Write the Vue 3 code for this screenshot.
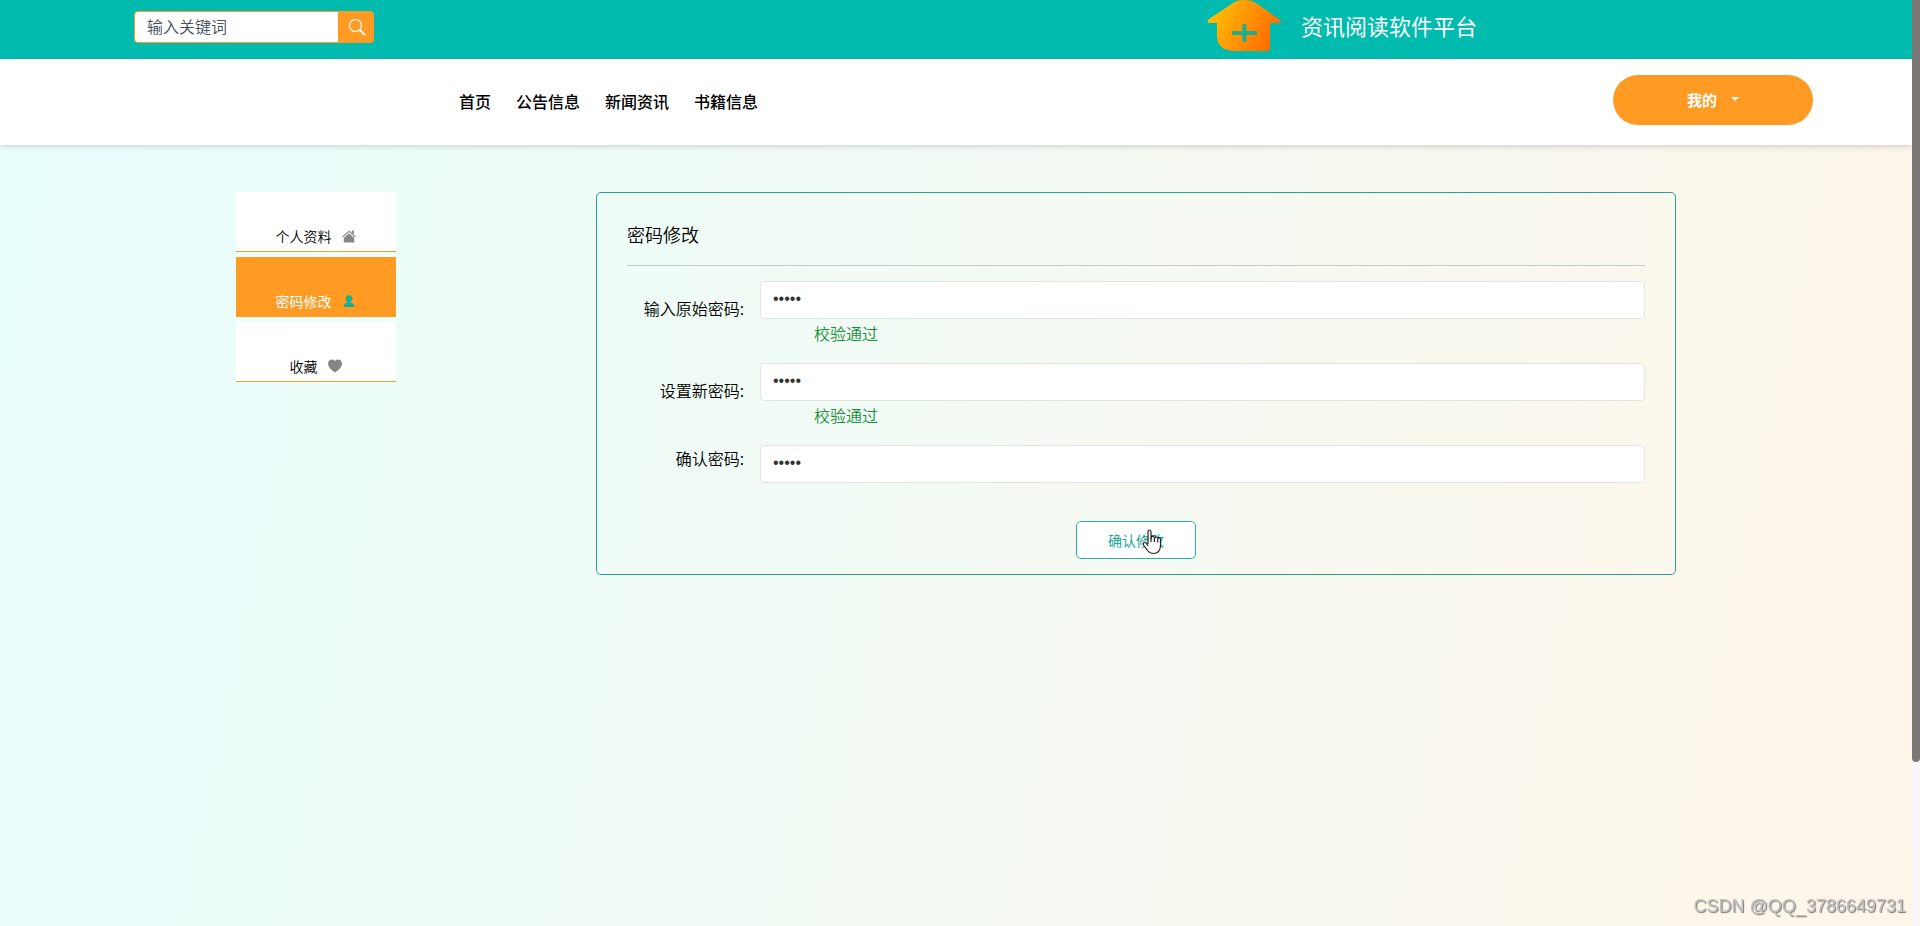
<script setup>
import { ref } from 'vue'

const keyword = ref('')
const navItems = ['首页', '公告信息', '新闻资讯', '书籍信息']
const sideItems = [
  { label: '个人资料', icon: 'home', active: false },
  { label: '密码修改', icon: 'person', active: true },
  { label: '收藏', icon: 'heart', active: false },
]
const fields = ref([
  { id: 'old-password', label: '输入原始密码:', value: '12345', message: '校验通过' },
  { id: 'new-password', label: '设置新密码:', value: '12345', message: '校验通过' },
  { id: 'confirm-password', label: '确认密码:', value: '12345', message: '' },
])
</script>

<template>
  <div class="page">
    <header class="topbar">
      <form class="search" role="search" @submit.prevent>
        <input v-model="keyword" class="search-input" type="text" placeholder="输入关键词" aria-label="输入关键词" />
        <button class="search-button" type="submit" aria-label="搜索">
          <svg width="18" height="18" viewBox="0 0 18 18" fill="none" stroke="#fff" stroke-width="1.2">
            <circle cx="7.5" cy="7.5" r="6" />
            <path d="M11.8 11.8 17 17" stroke-width="1.8" />
          </svg>
        </button>
      </form>
      <div class="brand">
        <svg class="logo" width="74" height="52" viewBox="0 0 74 52">
          <defs>
            <linearGradient id="roof" x1="0" y1="0" x2="1" y2="0.35">
              <stop offset="0.1" stop-color="#ffc107" />
              <stop offset="1" stop-color="#ff6f00" />
            </linearGradient>
          </defs>
          <path
            fill="url(#roof)"
            d="M26 3Q30 0 37 0T49 3L73 20Q75 23 72 23H63V48Q63 51 60 51H25Q10 49 10 36V23H2Q-1 22 2 19Z"
          />
          <path d="M25 33H50M37.500 24V42" stroke="#1fae8c" stroke-width="4" fill="none" />
        </svg>
        <span class="brand-name">资讯阅读软件平台</span>
      </div>
    </header>

    <div class="navbar">
      <nav class="nav">
        <a v-for="item in navItems" :key="item" href="#" class="nav-link">{{ item }}</a>
      </nav>
      <button class="mine" type="button"><span>我的</span><i class="caret"></i></button>
    </div>

    <main class="content">
      <aside class="side">
        <a v-for="item in sideItems" :key="item.label" href="#" class="side-link" :class="{ active: item.active }">
          <span>{{ item.label }}</span>
          <svg v-if="item.icon === 'home'" width="14" height="14" viewBox="0 0 14 14" fill="#858585">
            <path d="M7 4.200 1.800 9V13.500H12.200V9Z" />
            <path d="M.7 8 7 2.200 13.300 8" fill="none" stroke="#858585" stroke-width="1.100" />
            <path d="M9.800 1.500H11.800V5.500L9.800 3.700Z" />
          </svg>
          <svg v-else-if="item.icon === 'person'" width="14" height="14" viewBox="0 0 14 14" fill="#18ad94">
            <circle cx="7" cy="4.500" r="3.300" />
            <path d="M5.500 6H8.500V8.500Q12.500 9 12.500 13H1.500Q1.500 9 5.500 8.500Z" />
          </svg>
          <svg v-else width="14" height="14" viewBox="0 0 14 14" fill="#858585">
            <path d="M7 2Q9 0 11.300.7 14 1.600 14 5 13.600 9.500 7 13.500.4 9.500 0 5 0 1.600 2.700.7 5 0 7 2Z" />
          </svg>
        </a>
      </aside>

      <form class="panel" @submit.prevent>
        <h1 class="panel-title">密码修改</h1>
        <div v-for="field in fields" :key="field.id" class="row">
          <label class="row-label" :for="field.id">{{ field.label }}</label>
          <div class="row-control">
            <input :id="field.id" v-model="field.value" class="row-input" type="password" />
            <p v-if="field.message" class="row-message">{{ field.message }}</p>
          </div>
        </div>
        <div class="actions">
          <button class="submit" type="submit">
            确认修改
            <svg class="pointer" width="20" height="26" viewBox="0 0 20 26" fill="#fff" stroke="#222" stroke-width="1.200">
              <path
                d="M6 15V3Q6 1 7.500 1T9 3V10Q9 7 11 7.500T12.500 10Q12.500 7.500 14.500 8T15.700 10.500Q16 8.500 17.500 9T18.500 11V17Q18 24 12 24.500 8 24.500 6 22L1.500 16Q.5 13.500 2.500 13.500T6 17"
              />
              <path d="M9 9V13M12.400 9.500V13M15.700 10.500V13.500" />
            </svg>
          </button>
        </div>
      </form>
    </main>

    <div class="watermark">CSDN @QQ_3786649731</div>
    <div class="scroll-track"><div class="scroll-thumb"></div></div>
  </div>
</template>

<style>
html,
body {
  margin: 0;
}
</style>

<style scoped>
.page {
  min-height: 100vh;
  box-sizing: border-box;
  padding-right: 8px;
  background: linear-gradient(102deg, #e8fffe 0%, #fff5e9 100%) 0 0 / 100% 121%;
  font-family: 'Noto Sans CJK SC', sans-serif;
  font-size: 16px;
  font-weight: 350;
  color: #000;
}
a {
  text-decoration: none;
  color: inherit;
}
input,
button {
  font: inherit;
  box-sizing: border-box;
}
.topbar {
  display: flex;
  justify-content: space-between;
  height: 59px;
  padding: 0 435px 0 134px;
  box-sizing: border-box;
  background: #00bbae;
}
.search {
  display: flex;
  width: 240px;
  height: 32px;
  margin-top: 11px;
}
.search-input {
  flex: 1;
  min-width: 0;
  padding: 0 12px 2px;
  border: 1px solid #ff9b23;
  border-radius: 4px 0 0 4px;
  background: #fff;
  outline: none;
}
.search-input::placeholder {
  color: #465058;
  opacity: 1;
}
.search-button {
  display: grid;
  place-items: center;
  width: 35px;
  padding: 0;
  border: 0;
  border-radius: 0 4px 4px 0;
  background: #ff9b23;
}
.brand {
  display: flex;
  align-items: flex-start;
  gap: 20px;
}
.brand-name {
  line-height: 50px;
  font-size: 22px;
  font-weight: 400;
  color: #fff;
}
.navbar {
  position: relative;
  display: flex;
  justify-content: space-between;
  height: 86px;
  padding: 0 99px 0 459px;
  box-sizing: border-box;
  background: #fff;
  box-shadow: 0 2px 5px rgba(0, 0, 0, 0.15);
}
.nav {
  display: flex;
  align-items: center;
  gap: 25px;
  padding-bottom: 2px;
  font-weight: 500;
}
.mine {
  display: flex;
  align-items: center;
  justify-content: center;
  gap: 14px;
  width: 200px;
  height: 50px;
  margin-top: 16px;
  padding: 0 0 2px;
  border: 0;
  border-radius: 25px;
  background: #ff9b23;
  color: #fff;
  font-size: 15px;
  font-weight: 700;
}
.caret {
  border: 4px solid transparent;
  border-top-color: #fff;
  border-bottom: 0;
}
.content {
  display: flex;
  justify-content: space-between;
  align-items: flex-start;
  max-width: 1440px;
  margin: 47px auto 0;
}
.side {
  display: flex;
  flex-direction: column;
  gap: 5px;
  width: 11.1%;
}
.side-link {
  display: flex;
  align-items: center;
  justify-content: center;
  gap: 11px;
  height: 60px;
  padding-top: 28px;
  box-sizing: border-box;
  border-bottom: 1px solid #ff9b23;
  background: #fff;
  font-size: 14px;
}
.side-link.active {
  background: #ff9b23;
  color: #fff;
  font-weight: 400;
}
.panel {
  width: 75%;
  box-sizing: border-box;
  padding: 20px 30px 15px;
  border: 1px solid #2aa198;
  border-radius: 5px;
}
.panel-title {
  margin: 0 0 15px;
  padding-bottom: 9px;
  border-bottom: 1px solid #c3cfc4;
  line-height: 43px;
  font-size: 18px;
  font-weight: 350;
}
.row {
  display: flex;
  align-items: center;
  margin-bottom: 16px;
}
.row-label {
  width: 117px;
  margin-right: 16px;
  padding-bottom: 12px;
  text-align: right;
}
.row-control {
  flex: 1;
}
.row-input {
  display: block;
  width: 100%;
  height: 38px;
  padding: 0 12px 2px;
  border: 1px solid #e0e6e2;
  border-radius: 4px;
  background: #fff;
  color: #333;
  font-family: 'Liberation Sans', sans-serif;
  outline: none;
}
.row-message {
  margin: 0;
  padding-left: 54px;
  line-height: 28px;
  color: #16913a;
}
.actions {
  display: flex;
  justify-content: center;
  padding-top: 22px;
}
.submit {
  position: relative;
  width: 120px;
  height: 38px;
  border: 1px solid #25b0a2;
  border-radius: 5px;
  background: #fff;
  color: #009f8e;
  font-size: 14px;
}
.pointer {
  position: absolute;
  left: 65px;
  top: 7px;
}
.watermark {
  position: fixed;
  right: 14px;
  bottom: 8px;
  line-height: 24px;
  font-family: 'Liberation Sans', sans-serif;
  font-size: 18px;
  font-weight: 400;
  color: #c4c1bd;
  text-shadow: 1px 1px 1px #777;
}
.scroll-track {
  position: fixed;
  top: 0;
  right: 0;
  bottom: 0;
  width: 8px;
  background: #f8f6f8;
}
.scroll-thumb {
  height: 82.3%;
  border-radius: 0 0 4px 4px;
  background: #7b7777;
}
</style>
